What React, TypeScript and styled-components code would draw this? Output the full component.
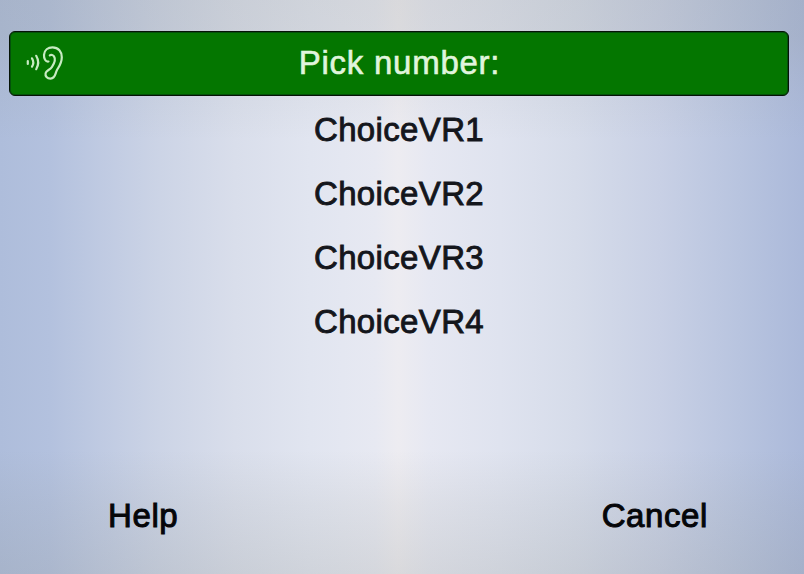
import React from 'react';
import styled, { createGlobalStyle } from 'styled-components';

const GlobalStyle = createGlobalStyle`
  * { box-sizing: border-box; }
  body { margin: 0; overflow: hidden; }
`;

const Screen = styled.main`
  width: 804px;
  height: 574px;
  padding: 31px 15px 0 9px;
  display: flex;
  flex-direction: column;
  font-family: 'Liberation Sans', Arial, sans-serif;
  font-size: 33px;
  background:
    linear-gradient(to bottom,
      rgba(138, 142, 136, 0.2) 0,
      rgba(138, 142, 136, 0.19) 36px,
      rgba(138, 142, 136, 0.06) 95px,
      rgba(138, 142, 136, 0) 140px,
      rgba(138, 142, 136, 0) 450px,
      rgba(138, 142, 136, 0.1) 505px,
      rgba(138, 142, 136, 0.2) 574px),
    linear-gradient(to right,
      #aebddb 0, #b3c1de 50px, #bfcae2 100px, #ccd4e6 160px,
      #d9deeb 235px, #e1e5f0 310px, #e7e9f2 375px, #edecf1 398px,
      #e6e8f2 430px, #dfe3ef 500px, #d6dcea 575px, #c8d0e5 660px,
      #b8c4df 740px, #abb9da 804px);
`;

const Banner = styled.header`
  height: 65px;
  flex: none;
  display: grid;
  grid-template-columns: 60px 1fr 60px;
  align-items: center;
  border: 1.5px solid #061306;
  border-radius: 6px;
  background: #047600;
  box-shadow: inset 0 0 0 1px #03520a;
`;

const Title = styled.h1`
  margin: 0;
  padding: 0 0 1px 1px;
  font-size: 33px;
  font-weight: 400;
  line-height: 38px;
  letter-spacing: 0.75px;
  text-align: center;
  color: #e0f5dd;
  -webkit-text-stroke: 0.6px #e0f5dd;
`;

const EarIcon = styled.svg`
  display: block;
  margin-left: 15px;
  fill: none;
  stroke: #c8ebc2;
  stroke-width: 2.2;
  stroke-linecap: round;
  stroke-linejoin: round;
`;

const Choices = styled.ul`
  margin: 2px 0 0;
  padding: 0;
  list-style: none;
`;

const Choice = styled.li`
  height: 64px;
  line-height: 64px;
  text-align: center;
  letter-spacing: 0.35px;
  color: #14161c;
  -webkit-text-stroke: 0.9px #14161c;
`;

const Actions = styled.footer`
  margin-top: 130px;
  padding: 0 81px 0 99px;
  display: flex;
  justify-content: space-between;
`;

const Action = styled.button`
  padding: 0;
  border: 0;
  background: none;
  font: inherit;
  line-height: 64px;
  letter-spacing: 0.6px;
  color: #050609;
  -webkit-text-stroke: 1px #050609;
`;

const choices = ['ChoiceVR1', 'ChoiceVR2', 'ChoiceVR3', 'ChoiceVR4'];

export default function App() {
  return (
    <>
      <GlobalStyle />
      <Screen>
        <Banner>
          <EarIcon width="44" height="40" viewBox="0 0 44 40" aria-hidden="true">
            <path d="M2.8 17v3" />
            <path d="M7 14.3q2.6 4.2 0 8.4" />
            <path d="M11.2 11.8q4 6.7 0 13.4" />
            <path d="M23.5 17.5C20.5 18 18.8 14.5 19 10.8C19.4 6 23 3.4 27.5 3.4C33.5 3.4 36.8 7.8 36.8 13.2C36.8 19 34.2 22.3 32 26C30 29.6 30.6 34.6 25.6 34.6C22 34.6 20 32.2 20.6 29.2C21.2 26.3 24.8 26.1 27 22.8C29.7 18.8 31 15.5 29 12.4C28.1 11 26.2 10.3 24.8 11.3" />
          </EarIcon>
          <Title>Pick number:</Title>
        </Banner>
        <Choices>
          {choices.map((label) => (
            <Choice key={label}>{label}</Choice>
          ))}
        </Choices>
        <Actions>
          <Action>Help</Action>
          <Action>Cancel</Action>
        </Actions>
      </Screen>
    </>
  );
}
